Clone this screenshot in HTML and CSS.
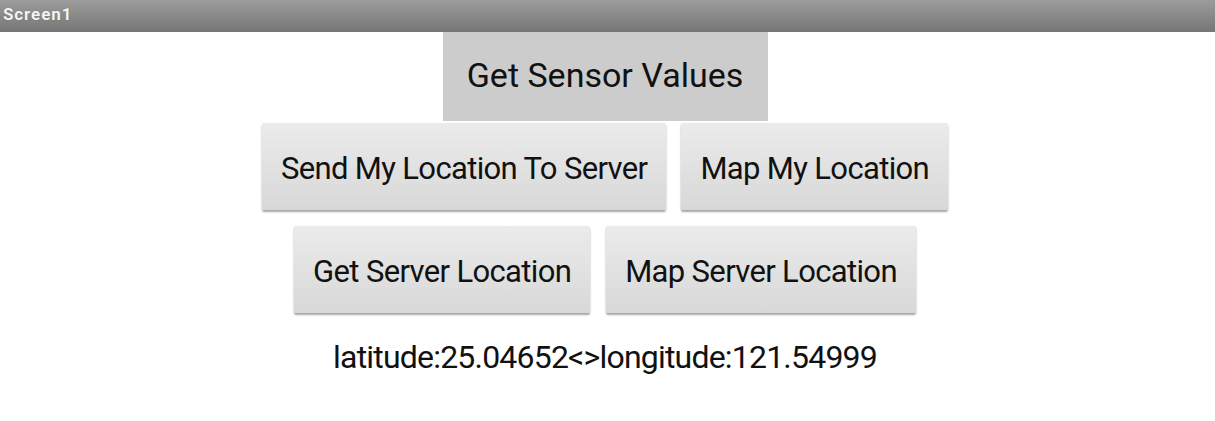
FILE: index.html
```html
<!DOCTYPE html>
<html>
<head>
<meta charset="utf-8">
<link rel="stylesheet" href="styles.css">
</head>
<body>
<div class="titlebar">Screen1</div>
<main class="screen">
  <button class="btn-flat">Get Sensor Values</button>
  <div class="row row-2">
    <button class="btn">Send My Location To Server</button>
    <button class="btn">Map My Location</button>
  </div>
  <div class="row row-3">
    <button class="btn">Get Server Location</button>
    <button class="btn">Map Server Location</button>
  </div>
  <div class="label">latitude:25.04652&lt;&gt;longitude:121.54999</div>
</main>
</body>
</html>
```
FILE: styles.css
```css
html, body {
  margin: 0;
  padding: 0;
  background: #ffffff;
  font-family: Roboto, "Noto Sans", sans-serif;
  color: #111;
}
.titlebar {
  height: 32px;
  box-sizing: border-box;
  padding: 2px 0 0 3px;
  background: linear-gradient(#9c9c9c, #767676);
  color: #f4f4f4;
  font-weight: bold;
  font-size: 17px;
  letter-spacing: 0.9px;
  line-height: 24px;
  text-shadow: 0 0 1px rgba(0,0,0,0.3);
}
.screen {
  display: flex;
  flex-direction: column;
  align-items: center;
  padding-right: 5px;
}
button {
  font-family: Roboto, "Noto Sans", sans-serif;
  color: #111;
  border: none;
  margin: 0;
  cursor: pointer;
}
.btn-flat {
  width: 325px;
  height: 89px;
  background: #cccccc;
  font-size: 34px;
  padding: 0 0 4px 0;
}
.row {
  display: flex;
  gap: 15px;
}
.row-2 {
  margin-top: 2px;
}
.row-3 {
  margin-top: 16px;
  gap: 16px;
}
.btn {
  height: 87px;
  padding: 3px 19px 0 19px;
  font-size: 31px;
  letter-spacing: -0.65px;
  border-radius: 2px;
  background: linear-gradient(#ebebeb, #d8d8d8);
  box-shadow: 0 2px 2px rgba(0,0,0,0.35), 0 0 1px rgba(0,0,0,0.15);
}
.label {
  margin-top: 24px;
  font-size: 32px;
  letter-spacing: -0.8px;
  line-height: 40px;
}
```
